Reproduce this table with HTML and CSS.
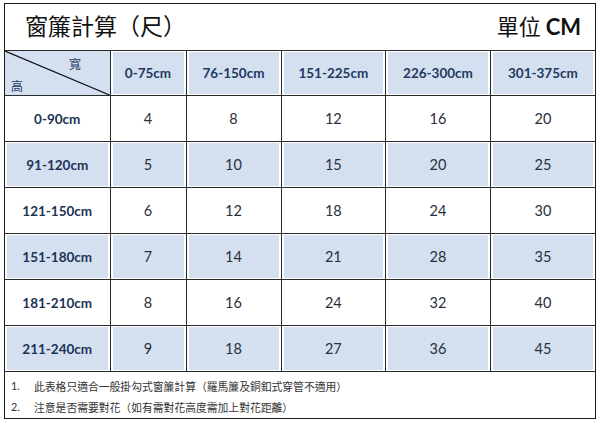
FILE: index.html
```html
<!DOCTYPE html>
<html lang="zh-Hant">
<head>
<meta charset="utf-8">
<link rel="stylesheet" href="styles.css">
</head>
<body>
<div class="sheet">
  <div class="title-row">
    <span class="title">窗簾計算（尺）</span>
    <span class="unit">單位 <b>CM</b></span>
  </div>
  <table class="grid">
    <colgroup>
      <col class="c0"><col class="c1"><col class="c2"><col class="c3"><col class="c3"><col class="c3">
    </colgroup>
    <tr class="blue head">
      <th class="corner">
        <svg class="diag" viewBox="0 0 100 100" preserveAspectRatio="none"><line x1="0" y1="0" x2="100" y2="100" stroke="#111" stroke-width="1.2" vector-effect="non-scaling-stroke"/></svg>
        <span class="w">寬</span><span class="h">高</span>
      </th>
      <th>0-75cm</th><th>76-150cm</th><th>151-225cm</th><th>226-300cm</th><th>301-375cm</th>
    </tr>
    <tr><th>0-90cm</th><td>4</td><td>8</td><td>12</td><td>16</td><td>20</td></tr>
    <tr class="blue"><th>91-120cm</th><td>5</td><td>10</td><td>15</td><td>20</td><td>25</td></tr>
    <tr><th>121-150cm</th><td>6</td><td>12</td><td>18</td><td>24</td><td>30</td></tr>
    <tr class="blue"><th>151-180cm</th><td>7</td><td>14</td><td>21</td><td>28</td><td>35</td></tr>
    <tr><th>181-210cm</th><td>8</td><td>16</td><td>24</td><td>32</td><td>40</td></tr>
    <tr class="blue"><th>211-240cm</th><td>9</td><td>18</td><td>27</td><td>36</td><td>45</td></tr>
  </table>
  <div class="notes">
    <div class="note"><span class="num">1.</span><span>此表格只適合一般掛勾式窗簾計算（羅馬簾及銅釦式穿管不適用）</span></div>
    <div class="note"><span class="num">2.</span><span>注意是否需要對花（如有需對花高度需加上對花距離）</span></div>
  </div>
</div>
</body>
</html>
```

FILE: styles.css
```css
html, body {
  margin: 0;
  padding: 0;
  background: #fff;
}
body {
  padding: 3px 0 0 4px;
  font-family: Lato, "Noto Sans CJK TC", sans-serif;
}
.sheet {
  box-sizing: border-box;
  width: 592px;
  border: 1.5px solid #1a1a1a;
}
.title-row {
  height: 46px;
  display: flex;
  align-items: center;
  justify-content: space-between;
  padding: 0 14px 4px 20px;
  box-sizing: border-box;
}
.title {
  font-family: "Noto Sans CJK TC", sans-serif;
  font-size: 23px;
  color: #111;
}
.unit {
  font-family: "Noto Sans CJK TC", sans-serif;
  font-size: 22px;
  color: #111;
}
.unit b {
  font-family: Lato, sans-serif;
  font-weight: 700;
}
.grid {
  width: 100%;
  table-layout: fixed;
  border-collapse: collapse;
}
.c0 { width: 105px; }
.c1 { width: 76px; }
.c2 { width: 95px; }
.grid th, .grid td {
  border: 1px solid #2a2a2a;
  height: 45px;
  padding: 0;
  text-align: center;
  vertical-align: middle;
}
.grid tr > :first-child { border-left: none; }
.grid tr > :last-child { border-right: none; }
.grid th {
  font-weight: 700;
  font-size: 13.5px;
  color: #1c3358;
}
.grid td {
  font-size: 14.5px;
  color: #2b2f3a;
}
.grid tr.head th {
  height: 44px;
  color: #1f3a62;
}
.blue th, .blue td {
  background: #d4e0f0;
  box-shadow: inset 2px 0 #fff, inset -2px 0 #fff, inset 0 1px #fff, inset 0 -1px #fff;
}
.grid th.corner {
  position: relative;
  box-shadow: none;
  font-family: "Noto Sans CJK TC", sans-serif;
  font-weight: 400;
  font-size: 12px;
  color: #3a5a85;
}
.diag {
  position: absolute;
  left: 0;
  top: 0;
  width: 100%;
  height: 100%;
}
.corner .w {
  position: absolute;
  left: 64px;
  top: 4px;
}
.corner .h {
  position: absolute;
  left: 6px;
  top: 26px;
}
.notes {
  box-sizing: border-box;
  height: 46px;
  padding: 2px 0 0 6px;
  display: flex;
  flex-direction: column;
  justify-content: center;
  gap: 5px;
  font-family: "Noto Sans CJK TC", sans-serif;
  font-size: 10.8px;
  color: #333;
}
.note {
  display: flex;
  line-height: 16px;
}
.note .num {
  font-family: Lato, sans-serif;
  width: 23px;
}
```
